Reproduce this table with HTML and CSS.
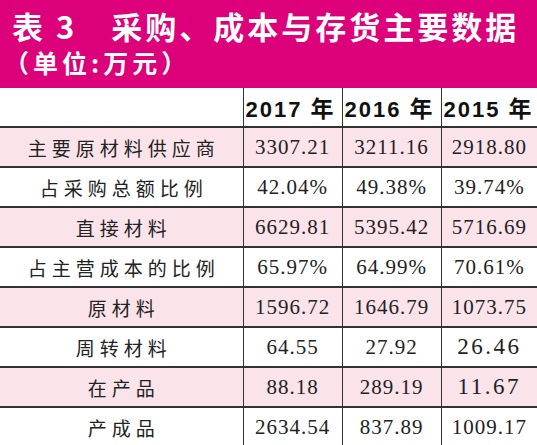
FILE: index.html
```html
<!DOCTYPE html>
<html lang="zh-CN">
<head>
    <meta charset="UTF-8">
    <meta name="viewport" content="width=device-width, initial-scale=1.0">
    <title>表3 采购、成本与存货主要数据</title>
    <link rel="stylesheet" href="styles.css">
</head>
<body>
    <div class="sheet">
        <header class="title-bar">
            <h1>表 3　采购、成本与存货主要数据</h1>
            <p class="unit">（单位:万元）</p>
        </header>
        <table class="data-table">
            <colgroup>
                <col class="col-label">
                <col class="col-year">
                <col class="col-year">
                <col class="col-last">
            </colgroup>
            <thead>
                <tr>
                    <th></th>
                    <th>2017 <span class="cjk">年</span></th>
                    <th>2016 <span class="cjk">年</span></th>
                    <th>2015 <span class="cjk">年</span></th>
                </tr>
            </thead>
            <tbody>
                <tr class="pink">
                    <td class="label">主要原材料供应商</td>
                    <td>3307.21</td>
                    <td>3211.16</td>
                    <td>2918.80</td>
                </tr>
                <tr>
                    <td class="label">占采购总额比例</td>
                    <td>42.04%</td>
                    <td>49.38%</td>
                    <td>39.74%</td>
                </tr>
                <tr class="pink">
                    <td class="label">直接材料</td>
                    <td>6629.81</td>
                    <td>5395.42</td>
                    <td>5716.69</td>
                </tr>
                <tr>
                    <td class="label">占主营成本的比例</td>
                    <td>65.97%</td>
                    <td>64.99%</td>
                    <td>70.61%</td>
                </tr>
                <tr class="pink">
                    <td class="label">原材料</td>
                    <td>1596.72</td>
                    <td>1646.79</td>
                    <td>1073.75</td>
                </tr>
                <tr>
                    <td class="label">周转材料</td>
                    <td>64.55</td>
                    <td>27.92</td>
                    <td class="wide">26.46</td>
                </tr>
                <tr class="pink">
                    <td class="label">在产品</td>
                    <td>88.18</td>
                    <td>289.19</td>
                    <td class="wide">11.67</td>
                </tr>
                <tr>
                    <td class="label">产成品</td>
                    <td>2634.54</td>
                    <td>837.89</td>
                    <td>1009.17</td>
                </tr>
            </tbody>
        </table>
    </div>
</body>
</html>
```

FILE: styles.css
```css
body {
    margin: 0;
    background: #ffffff;
    font-family: 'Noto Sans CJK SC', sans-serif;
    color: #222;
}

.sheet {
    width: 537px;
    height: 445px;
    overflow: hidden;
}

.title-bar {
    height: 88px;
    box-sizing: border-box;
    background-color: #dc007a; /* magenta title band */
    color: #ffffff;
    padding: 9px 0 0 12px;
}

.title-bar h1 {
    margin: 0;
    font-size: 31px;
    line-height: 34px;
    font-weight: 700;
    letter-spacing: 3px;
    white-space: nowrap;
}

.unit {
    margin: 5px 0 0 -8px;
    font-size: 25px;
    line-height: 28px;
    font-weight: 700;
    letter-spacing: 4px;
}

.data-table {
    width: 537px;
    border-collapse: collapse;
    table-layout: fixed;
}

.col-label { width: 243px; }
.col-year { width: 99px; }
.col-last { width: 96px; }

.data-table th,
.data-table td {
    padding: 0;
    text-align: center;
    border-left: 1px solid #333;
    border-bottom: 2px solid #333;
    white-space: nowrap;
}

.data-table th:first-child,
.data-table td:first-child {
    border-left: none;
}

.data-table thead tr {
    height: 39px;
}

.data-table th {
    font-family: 'Liberation Sans', 'Noto Sans CJK SC', sans-serif;
    font-size: 22px;
    font-weight: 700;
    letter-spacing: 2px;
    color: #111;
    text-align: left;
    padding-left: 2px;
}

.data-table th .cjk {
    font-family: 'Noto Sans CJK SC', sans-serif;
    font-size: 23px;
    letter-spacing: 0;
}

.data-table tbody tr {
    height: 40px;
}

.data-table td {
    font-family: 'Liberation Serif', serif;
    font-size: 21px;
    letter-spacing: 1px;
}

.data-table td.label {
    font-family: 'Noto Sans CJK SC', sans-serif;
    font-size: 19px;
    letter-spacing: 5px;
    text-indent: 5px;
}

.data-table td.wide {
    font-size: 23px;
    letter-spacing: 2.5px;
}

.pink td {
    background-color: #fbe3ea; /* soft pink stripe */
}
```
